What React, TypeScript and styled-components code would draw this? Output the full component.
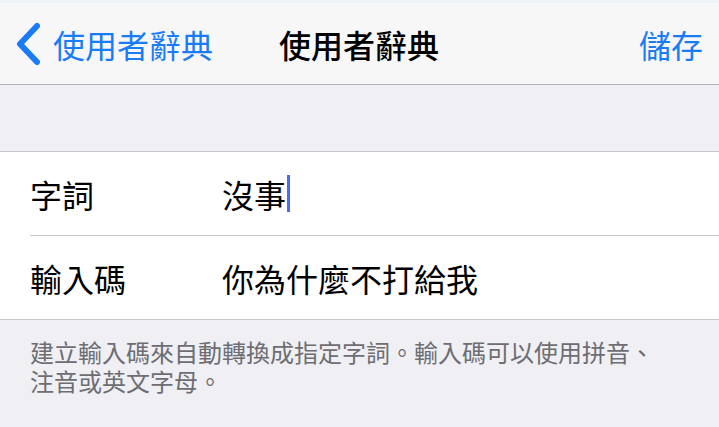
import styled, { createGlobalStyle } from 'styled-components';

const GlobalStyle = createGlobalStyle`
  html, body {
    margin: 0;
    padding: 0;
    background: #efeff4;
    font-family: "Noto Sans CJK TC", "Noto Sans", sans-serif;
  }
`;

const Page = styled.div`
  width: 719px;
  min-height: 427px;
  background: #efeff4;
  display: flex;
  flex-direction: column;
`;

const NavBar = styled.header`
  height: 85px;
  background: #f7f7f8;
  border-top: 3px solid #eef3fa;
  box-sizing: border-box;
  border-bottom: 1px solid #b2b2b2;
  display: grid;
  grid-template-columns: 1fr auto 1fr;
  align-items: center;
  padding: 0 16px 0 15px;
`;

const BackButton = styled.div`
  display: flex;
  align-items: center;
  gap: 12px;
  color: #1a7cf4;
  font-size: 32px;
  line-height: 1;
`;

const Title = styled.div`
  font-size: 32px;
  font-weight: 500;
  color: #000;
  line-height: 1;
`;

const Action = styled.div`
  justify-self: end;
  color: #1a7cf4;
  font-size: 32px;
  line-height: 1;
`;

const Spacer = styled.div`
  height: 66px;
`;

const Table = styled.section`
  background: #fff;
  border-top: 1px solid #c8c7cc;
  border-bottom: 1px solid #c8c7cc;
`;

const Row = styled.div<{ $last?: boolean }>`
  height: 83px;
  margin-left: 30px;
  display: flex;
  align-items: center;
  border-bottom: ${(p) => (p.$last ? 'none' : '1px solid #c8c7cc')};
`;

const Label = styled.div`
  width: 192px;
  font-size: 32px;
  color: #000;
  line-height: 1;
`;

const Value = styled.div`
  display: flex;
  align-items: center;
  font-size: 32px;
  color: #000;
  line-height: 1;
`;

const Caret = styled.span`
  display: inline-block;
  width: 3px;
  height: 37px;
  background: #4a6cf0;
  margin-left: 1px;
`;

const Footer = styled.p`
  margin: 0;
  padding: 17px 30px 0;
  font-size: 24px;
  line-height: 29px;
  color: #6d6d72;
`;

function Chevron() {
  return (
    <svg width="26" height="42" viewBox="0 0 26 42" fill="none">
      <path d="M22 3 L5 21 L22 39" stroke="#1a7cf4" strokeWidth="6" strokeLinecap="round" strokeLinejoin="round" />
    </svg>
  );
}

export default function App() {
  return (
    <Page>
      <GlobalStyle />
      <NavBar>
        <BackButton>
          <Chevron />
          使用者辭典
        </BackButton>
        <Title>使用者辭典</Title>
        <Action>儲存</Action>
      </NavBar>
      <Spacer />
      <Table>
        <Row>
          <Label>字詞</Label>
          <Value>
            沒事
            <Caret />
          </Value>
        </Row>
        <Row $last>
          <Label>輸入碼</Label>
          <Value>你為什麼不打給我</Value>
        </Row>
      </Table>
      <Footer>
        建立輸入碼來自動轉換成指定字詞。輸入碼可以使用拼音、
        <br />
        注音或英文字母。
      </Footer>
    </Page>
  );
}
